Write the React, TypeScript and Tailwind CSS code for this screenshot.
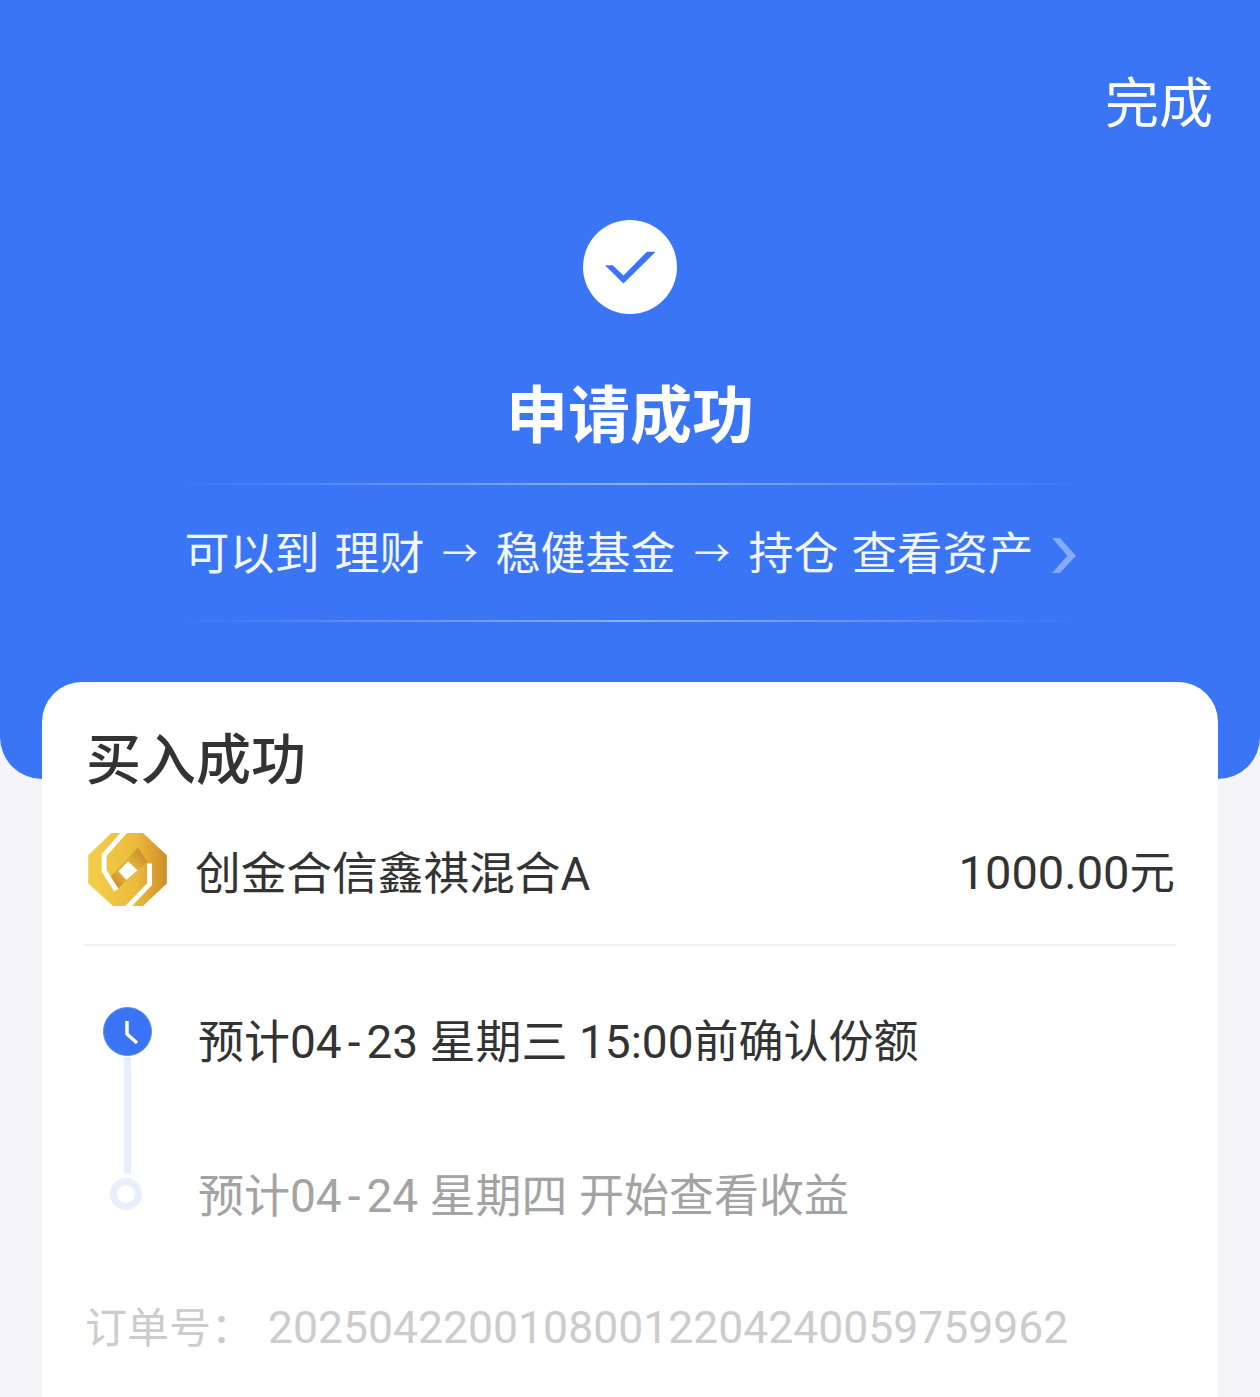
import React from 'react';

const FundLogo: React.FC = () => (
    <svg width="79" height="73" viewBox="85 68 237 220" className="shrink-0">
        <defs>
            <linearGradient id="gold" x1="0" y1="0" x2="1" y2="0">
                <stop offset="0" stopColor="#f3cf4c" />
                <stop offset="0.6" stopColor="#ecbb3c" />
                <stop offset="1" stopColor="#d08d28" />
            </linearGradient>
            <linearGradient id="goldInner" x1="0" y1="1" x2="1" y2="0">
                <stop offset="0" stopColor="#b87c20" />
                <stop offset="0.35" stopColor="#e0ac35" />
                <stop offset="0.65" stopColor="#e0ac35" />
                <stop offset="1" stopColor="#bd8224" />
            </linearGradient>
        </defs>
        <path d="M155 68H250L322 135V220L250 288H160L85 220V135Z" fill="url(#gold)" />
        <path d="M147 205L235 112L264 155L165 244Z" fill="url(#goldInner)" />
        <path d="M205 153L234 180L200 210L176 183Z" fill="#fff" />
        <path d="M197 62L133 135V182L170 240" fill="none" stroke="#fff" strokeWidth="15" />
        <path d="M201 294L270 222V160" fill="none" stroke="#fff" strokeWidth="15" />
    </svg>
);

const Timeline: React.FC = () => (
    <div className="flex flex-col items-center w-[49px] shrink-0">
        <div className="w-[49px] h-[49px] rounded-full bg-[#3a75f6] border border-[#5a8bf6]">
            <svg width="47" height="47" viewBox="1 1 47 47">
                <path d="M24 14V27L34 36" fill="none" stroke="#fff" strokeWidth="3.5" />
            </svg>
        </div>
        <div className="w-[7px] h-[117px] bg-[#e7effd] mt-[1px]" />
        <div className="w-[32px] h-[32px] rounded-full border-[7px] border-[#e7effd] mt-[4px] -ml-[3px]" />
    </div>
);

const App: React.FC = () => {
    return (
        <div
            className="w-[1260px] h-[1397px] overflow-hidden bg-[#f5f5f9]"
            style={{ fontFamily: 'Roboto, "Noto Sans CJK SC", sans-serif' }}
        >
            {/* blue header */}
            <div className="h-[779px] bg-[#3a75f6] rounded-b-[42px] flex flex-col items-center text-white">
                <div className="w-full flex justify-end pt-[65px] pr-[47px]">
                    <span className="text-[54px] leading-[80px]">完成</span>
                </div>
                <div className="mt-[75px] w-[94px] h-[94px] rounded-full bg-white flex items-center justify-center">
                    <svg width="51" height="33" viewBox="137 155 152 98" className="mt-[1px]">
                        <path d="M137 197H160L192 228L262 157H288L192 252Z" fill="#3a75f6" />
                    </svg>
                </div>
                <h1 className="mt-[58px] text-[62px] leading-[90px] font-bold">申请成功</h1>
                <div className="mt-[21px] w-[900px] h-[2px] bg-gradient-to-r from-transparent via-[#8fb2fa] to-transparent" />
                <div className="h-[135px] pt-[4px] flex items-center text-[45px] leading-[60px] text-[#f2f6ff]">
                    <span>可以到</span>
                    <span className="ml-[15px]">理财</span>
                    <span className="w-[71px] text-center text-[36px]">→</span>
                    <span>稳健基金</span>
                    <span className="w-[73px] text-center text-[36px]">→</span>
                    <span>持仓</span>
                    <span className="ml-[13px] text-[45.5px]">查看资产</span>
                    <svg width="24" height="35" viewBox="455 205 70 103" className="ml-[18px] mt-[1px]">
                        <path d="M455 205H478L525 257L478 308H455L500 257Z" fill="#86aafa" />
                    </svg>
                </div>
                <div className="w-[900px] h-[2px] bg-gradient-to-r from-transparent via-[#8fb2fa] to-transparent" />
            </div>

            {/* card */}
            <div className="relative mx-[42px] -mt-[97px] h-[760px] bg-white rounded-t-[40px] px-[42px]">
                <h2 className="pt-[38px] text-[55px] leading-[80px] font-medium text-[#333333] pl-[2px]">买入成功</h2>
                <div className="mt-[19px] h-[127px] flex items-center border-b-2 border-[#f0f0f2] pb-[25px]">
                    <div className="pl-[4px]"><FundLogo /></div>
                    <span className="ml-[28px] mt-[12px] text-[45.7px] leading-[60px] text-[#333333]">创金合信鑫祺混合A</span>
                    <span className="ml-auto mt-[8px] text-[45.5px] leading-[60px] text-[#333333] pr-[1px]">
                        <span className="text-[47px]">1000.00</span>元
                    </span>
                </div>

                <div className="mt-[61px] flex pl-[19px]">
                    <Timeline />
                    <div className="ml-[46px] flex flex-col">
                        <div className="mt-[5px] text-[46px] leading-[60px] text-[#333333]">
                            预计04<span className="px-[6px]">-</span>23 星期三 15:00<span className="text-[45px]">前确认份额</span>
                        </div>
                        <div className="mt-[93px] text-[46px] leading-[60px] text-[#a3a3a3]">
                            预计04<span className="px-[6px]">-</span>24 星期四 <span className="text-[45px]">开始查看收益</span>
                        </div>
                    </div>
                </div>

                <div className="mt-[71px] flex items-baseline leading-[60px] text-[#cccccc] pl-[1px]">
                    <span className="text-[42px]">订单号：</span>
                    <span className="ml-[15px] text-[44.5px]">20250422001080012204240059759962</span>
                </div>
            </div>
        </div>
    );
};

export default App;
